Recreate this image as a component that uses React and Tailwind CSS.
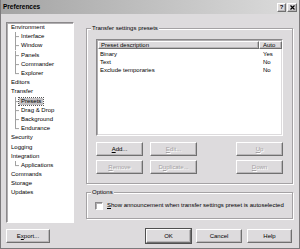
import React from 'react';

const font = { fontFamily: '"Liberation Sans", Arial, sans-serif' };

const raised =
  'border border-t-white border-l-white border-r-[#707070] border-b-[#707070] shadow-[inset_-1px_-1px_0_#b8b6b8]';

const treeItems = [
  { label: 'Environment', level: 0 },
  { label: 'Interface', level: 1 },
  { label: 'Window', level: 1 },
  { label: 'Panels', level: 1 },
  { label: 'Commander', level: 1 },
  { label: 'Explorer', level: 1, last: true },
  { label: 'Editors', level: 0 },
  { label: 'Transfer', level: 0 },
  { label: 'Presets', level: 1, selected: true },
  { label: 'Drag & Drop', level: 1 },
  { label: 'Background', level: 1 },
  { label: 'Endurance', level: 1, last: true },
  { label: 'Security', level: 0 },
  { label: 'Logging', level: 0 },
  { label: 'Integration', level: 0 },
  { label: 'Applications', level: 1, last: true },
  { label: 'Commands', level: 0 },
  { label: 'Storage', level: 0 },
  { label: 'Updates', level: 0 },
];

const presets = [
  { name: 'Binary', auto: 'Yes' },
  { name: 'Text', auto: 'No' },
  { name: 'Exclude temporaries', auto: 'No' },
];

const Button = ({ children, disabled, className = '' }) => (
  <div
    className={`flex items-center justify-center h-[14px] bg-[#dddbdd] ${raised} ${
      disabled ? 'text-[#a4a2a4] [text-shadow:1px_1px_0_#fff]' : 'text-black'
    } ${className}`}
  >
    {children}
  </div>
);

const TreeRow = ({ item }) => {
  if (item.level === 0) {
    return (
      <div className="h-[9.2px] flex items-center pl-[4px] whitespace-nowrap">{item.label}</div>
    );
  }
  return (
    <div className="h-[9.2px] flex items-center pl-[8px] whitespace-nowrap">
      <svg width="4" height="9.2" className="shrink-0">
        <line x1="0.5" y1="0" x2="0.5" y2={item.last ? 4.6 : 9.2} stroke="#a0a0a0" strokeWidth="1" />
        <line x1="0" y1="4.6" x2="4" y2="4.6" stroke="#a0a0a0" strokeWidth="1" />
      </svg>
      <span
        className={`px-[2px] leading-[7px] ${
          item.selected ? 'bg-[#c4c2c4] outline outline-dotted outline-[#555] outline-[0.5px]' : ''
        }`}
      >
        {item.label}
      </span>
    </div>
  );
};

export default function App() {
  return (
    <div
      className="w-[300px] h-[249px] bg-[#dddbdd] border-l border-r border-b border-[#7c7a7c] text-[6px] text-black flex flex-col overflow-hidden"
      style={font}
    >
      {/* Title bar */}
      <div className="h-[14px] shrink-0 flex items-center pl-[2px] pr-[2px] bg-[linear-gradient(to_right,#a4a4a4,#dcdcdc)]">
        <span className="font-bold text-[6.5px]">Preferences</span>
        <div className="ml-auto flex gap-[1px]">
          <div className={`w-[9px] h-[9px] bg-[#dddbdd] ${raised} flex items-center justify-center font-bold text-[6px] leading-none`}>
            ?
          </div>
          <div className={`w-[10px] h-[9px] bg-[#dddbdd] ${raised} flex items-center justify-center`}>
            <svg width="5" height="5" viewBox="0 0 5 5">
              <path d="M0.5 0.5L4.5 4.5M4.5 0.5L0.5 4.5" stroke="#000" strokeWidth="1.2" />
            </svg>
          </div>
        </div>
      </div>

      {/* Body */}
      <div className="flex pt-[8px] pl-[5px] h-[209px] shrink-0">
        {/* Tree */}
        <div className="w-[68px] h-[201px] bg-white border border-t-[#8a888a] border-l-[#8a888a] border-r-white border-b-white shadow-[inset_1px_1px_0_#b0aeb0] pt-[0px]">
          {treeItems.map((item) => (
            <TreeRow key={item.label} item={item} />
          ))}
        </div>

        {/* Right column */}
        <div className="ml-[12px] w-[207px] flex flex-col pt-[6px]">
          {/* Transfer settings presets group */}
          <div className="relative h-[156px] border border-[#a4a2a4] shadow-[inset_1px_1px_0_#fff,1px_1px_0_#fff] pt-[10px] pl-[9px]">
            <span className="absolute -top-[4px] left-[4px] px-[1px] bg-[#dddbdd] leading-[7px]">
              Transfer settings presets
            </span>
            <div className="w-[187px] h-[97px] bg-white border border-t-[#8a888a] border-l-[#8a888a] border-r-white border-b-white shadow-[inset_1px_1px_0_#b0aeb0,inset_-1px_-1px_0_#dddbdd]">
              <div className="flex h-[8px] pl-[1px] pt-[1px] box-content">
                <div className={`w-[161px] h-[8px] bg-[#dddbdd] ${raised} flex items-center pl-[2px]`}>
                  Preset description
                </div>
                <div className={`w-[23px] h-[8px] bg-[#dddbdd] ${raised} flex items-center pl-[3px]`}>
                  Auto
                </div>
              </div>
              <div className="pt-[1px]">
                {presets.map((p) => (
                  <div key={p.name} className="flex h-[8px] items-center">
                    <div className="w-[162px] pl-[3px]">{p.name}</div>
                    <div className="pl-[4px]">{p.auto}</div>
                  </div>
                ))}
              </div>
            </div>

            <div className="w-[187px] mt-[6px] flex flex-col gap-[4px]">
              <div className="flex justify-between">
                <div className="flex gap-[7px]">
                  <Button className="w-[47px]">
                    <span><span className="underline">A</span>dd...</span>
                  </Button>
                  <Button className="w-[47px]" disabled>
                    <span><span className="underline">E</span>dit...</span>
                  </Button>
                </div>
                <Button className="w-[47px]" disabled>
                  <span><span className="underline">U</span>p</span>
                </Button>
              </div>
              <div className="flex justify-between">
                <div className="flex gap-[7px]">
                  <Button className="w-[47px]" disabled>
                    <span><span className="underline">R</span>emove</span>
                  </Button>
                  <Button className="w-[47px]" disabled>
                    <span>D<span className="underline">u</span>plicate...</span>
                  </Button>
                </div>
                <Button className="w-[47px]" disabled>
                  <span><span className="underline">D</span>own</span>
                </Button>
              </div>
            </div>
          </div>

          {/* Options group */}
          <div className="relative mt-[8px] h-[27px] border border-[#a4a2a4] shadow-[inset_1px_1px_0_#fff,1px_1px_0_#fff] pt-[8px] pl-[8px] flex items-start">
            <span className="absolute -top-[4px] left-[4px] px-[1px] bg-[#dddbdd] leading-[7px]">Options</span>
            <div className="flex items-center gap-[4px]">
              <div className="w-[8px] h-[8px] bg-white border border-t-[#8a888a] border-l-[#8a888a] border-r-white border-b-white shadow-[inset_1px_1px_0_#b0aeb0]" />
              <span className="whitespace-nowrap">
                <span className="underline">S</span>how announcement when transfer settings preset is autoselected
              </span>
            </div>
          </div>
        </div>
      </div>

      {/* Bottom buttons */}
      <div className="flex pl-[5px] pr-[7px] mt-[6px]">
        <Button className="w-[44px]">
          <span>E<span className="underline">x</span>port...</span>
        </Button>
        <div className="ml-auto flex gap-[5px]">
          <Button className="w-[45px] outline outline-1 outline-[#505050]">OK</Button>
          <Button className="w-[46px]">Cancel</Button>
          <Button className="w-[45px]">Help</Button>
        </div>
      </div>
    </div>
  );
}
